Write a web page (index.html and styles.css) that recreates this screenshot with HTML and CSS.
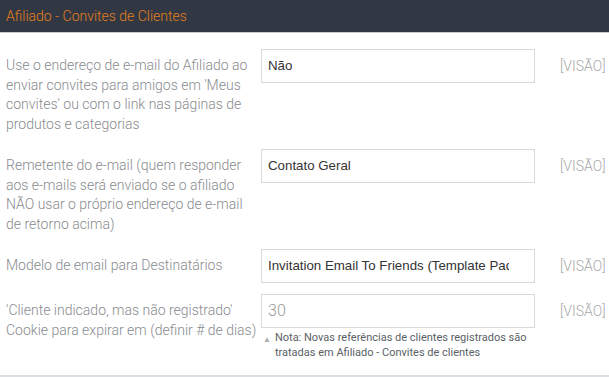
FILE: index.html
```html
<!DOCTYPE html>
<html lang="pt">
<head>
<meta charset="utf-8">
<link rel="stylesheet" href="styles.css">
</head>
<body>
<div class="panel">
  <div class="panel-head">Afiliado - Convites de Clientes</div>
  <div class="panel-body">
    <div class="row">
      <div class="label">Use o endereço de e-mail do Afiliado ao enviar convites para amigos em 'Meus convites' ou com o link nas páginas de produtos e categorias</div>
      <div class="field"><div class="input"><span class="value">Não</span></div></div>
      <div class="view">[VISÃO]</div>
    </div>
    <div class="row">
      <div class="label">Remetente do e-mail (quem responder aos e-mails será enviado se o afiliado NÃO usar o próprio endereço de e-mail de retorno acima)</div>
      <div class="field"><div class="input"><span class="value">Contato Geral</span></div></div>
      <div class="view">[VISÃO]</div>
    </div>
    <div class="row">
      <div class="label">Modelo de email para Destinatários</div>
      <div class="field"><div class="input"><span class="value">Invitation Email To Friends (Template Padrão)</span></div></div>
      <div class="view">[VISÃO]</div>
    </div>
    <div class="row">
      <div class="label">'Cliente indicado, mas não registrado' Cookie para expirar em (definir # de dias)</div>
      <div class="field">
        <div class="input input-num"><span class="value">30</span></div>
        <div class="note"><span class="tri">▲</span><span>Nota: Novas referências de clientes registrados são tratadas em Afiliado - Convites de clientes</span></div>
      </div>
      <div class="view">[VISÃO]</div>
    </div>
  </div>
  <div class="panel-foot"></div>
</div>
</body>
</html>
```
FILE: styles.css
```css
html, body {
  margin: 0;
  padding: 0;
  background: #ffffff;
}
body {
  width: 609px;
  height: 377px;
  overflow: hidden;
  font-family: Roboto, "Liberation Sans", sans-serif;
}
.panel {
  display: flex;
  flex-direction: column;
  height: 377px;
}
.panel-head {
  height: 32px;
  background: #323843;
  color: #e27f1c;
  font-size: 14px;
  font-weight: 300;
  line-height: 33px;
  padding-left: 6px;
  border-bottom: 1px solid #c9ccd1;
}
.panel-body {
  flex: 1;
  padding-top: 16px;
  display: flex;
  flex-direction: column;
  gap: 11px;
}
.row {
  display: grid;
  grid-template-columns: 254px 274px auto;
  column-gap: 1px;
  padding-left: 6px;
  align-items: start;
}
.label {
  font-size: 14px;
  font-weight: 300;
  color: #888b8f;
  line-height: 19.5px;
  padding: 7px 0 4px;
}
.field {
  display: flex;
  flex-direction: column;
}
.input {
  box-sizing: border-box;
  height: 34px;
  border: 1px solid #d9d9d9;
  padding: 0 25px 0 6px;
  font-family: "Liberation Sans", Arial, sans-serif;
  font-size: 13.3px;
  color: #333333;
  line-height: 32px;
}
.value {
  display: block;
  white-space: nowrap;
  overflow: hidden;
}
.input-num {
  font-family: Roboto, sans-serif;
  font-weight: 300;
  font-size: 16px;
  color: #9a9a9a;
}
.view {
  margin-left: 24px;
  font-size: 14px;
  font-weight: 300;
  color: #a8a8a8;
  line-height: 34px;
}
.note {
  display: flex;
  gap: 4px;
  margin-top: 2px;
  font-size: 11px;
  line-height: 15px;
  color: #5a5f66;
}
.tri {
  font-size: 8px;
  color: #a9adb2;
  padding-left: 2px;
  padding-top: 2px;
}
.panel-foot {
  height: 2px;
  background: #dcdde0;
}
```
